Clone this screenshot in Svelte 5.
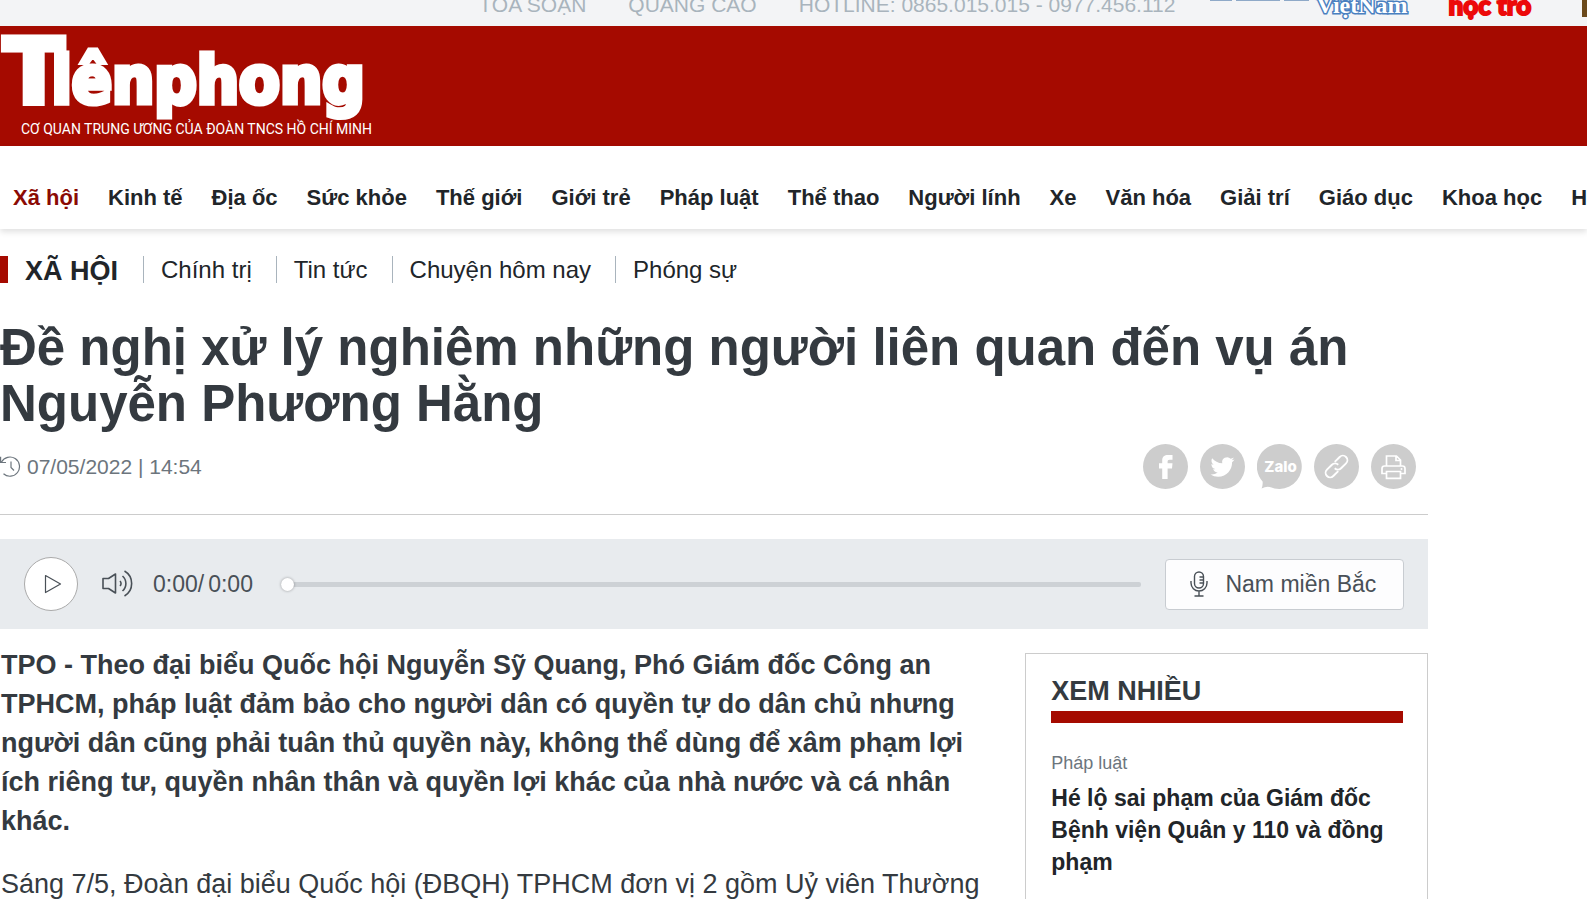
<script lang="ts">
  const topLinks = ['TÒA SOẠN', 'QUẢNG CÁO', 'HOTLINE: 0865.015.015 - 0977.456.112'];

  const categories = [
    'Xã hội', 'Kinh tế', 'Địa ốc', 'Sức khỏe', 'Thế giới', 'Giới trẻ', 'Pháp luật', 'Thể thao',
    'Người lính', 'Xe', 'Văn hóa', 'Giải trí', 'Giáo dục', 'Khoa học', 'Hàng không'
  ];
  const active = 'Xã hội';

  const subCategories = ['Chính trị', 'Tin tức', 'Chuyện hôm nay', 'Phóng sự'];

  const popular = [
    { category: 'Pháp luật', title: 'Hé lộ sai phạm của Giám đốc Bệnh viện Quân y 110 và đồng phạm' }
  ];

  let position = 0;
</script>

<div class="page">
  <div class="topbar">
    {#each topLinks as link}
      <a href="#top">{link}</a>
    {/each}
    <div class="partners">
      <a class="partner-line" href="#svvn" aria-label="Sinh viên">
        <svg width="99" height="2" viewBox="0 0 99 2"><path d="M0 0H22M26 0H70M74 0H99" stroke="#8ea9c8" stroke-width="2" /></svg>
      </a>
      <a class="vietnam" href="#svvn">ViệtNam</a>
      <a class="hoctro" href="#hoctro">học trò</a>
      <a class="golf" href="#golf" aria-label="Golf"></a>
    </div>
  </div>

  <header>
    <a class="logo" href="#home">
      <span class="wordmark"><span class="cap">T</span><span>iên</span><span>phong</span></span>
      <span class="tagline">CƠ QUAN TRUNG ƯƠNG CỦA ĐOÀN TNCS HỒ CHÍ MINH</span>
    </a>
  </header>

  <nav class="main-nav">
    {#each categories as category}
      <a href="#category" class:active={category === active}>{category}</a>
    {/each}
  </nav>

  <main>
    <div class="sub-nav">
      <a class="current" href="#xa-hoi">XÃ HỘI</a>
      {#each subCategories as sub}
        <a href="#sub">{sub}</a>
      {/each}
    </div>

    <h1>Đề nghị xử lý nghiêm những người liên quan đến vụ án Nguyễn Phương Hằng</h1>

    <div class="meta">
      <svg class="clock" width="21" height="22" viewBox="0 0 21 22" fill="none" stroke="#6c757d" stroke-width="1.2">
        <path d="M1.500 6A9.600 9.600 0 1 1 3.500 17.800M.6 .8V6.500H6M11 5.500V11.500L14 14.500" />
      </svg>
      <time>07/05/2022 | 14:54</time>
      <div class="share">
        <button aria-label="Facebook">
          <svg viewBox="0 0 45 45">
            <circle cx="22.500" cy="22.500" r="22.500" fill="#cdcdcd" />
            <path d="M19.200 35V24.500H16V19.300H19.200V16.500C19.200 12.500 21.500 11 25 11H29.500V15.700H26.700C25 15.700 24.600 16.500 24.600 17.700V19.300H29.500L29 24.500H24.600V35Z" fill="#fff" />
          </svg>
        </button>
        <button aria-label="Twitter">
          <svg viewBox="0 0 45 45">
            <circle cx="22.500" cy="22.500" r="22.500" fill="#cdcdcd" />
            <path transform="translate(10.500 11)" d="M23.953 4.570a10 10 0 0 1-2.825.775 4.958 4.958 0 0 0 2.163-2.723c-.951.555-2.005.959-3.127 1.184a4.920 4.920 0 0 0-8.384 4.482C7.690 8.095 4.067 6.130 1.640 3.162a4.822 4.822 0 0 0-.666 2.475c0 1.710.870 3.213 2.188 4.096a4.904 4.904 0 0 1-2.228-.616v.060a4.923 4.923 0 0 0 3.946 4.827 4.996 4.996 0 0 1-2.212.085 4.936 4.936 0 0 0 4.604 3.417 9.867 9.867 0 0 1-6.102 2.105c-.390 0-.779-.023-1.170-.067a13.995 13.995 0 0 0 7.557 2.209c9.053 0 13.998-7.496 13.998-13.985 0-.210 0-.420-.015-.630A9.935 9.935 0 0 0 24 4.590z" fill="#fff" />
          </svg>
        </button>
        <button aria-label="Zalo">
          <svg viewBox="0 0 45 45">
            <path d="M22.500 0A22.500 22.500 0 1 1 13 43Q9 42 4.600 44.500Q6 41 5.600 37.500A22.500 22.500 0 0 1 22.500 0Z" fill="#cdcdcd" />
            <text x="23.500" y="28" text-anchor="middle" class="zalo">Zalo</text>
          </svg>
        </button>
        <button aria-label="Sao chép liên kết">
          <svg viewBox="0 0 45 45">
            <circle cx="22.500" cy="22.500" r="22.500" fill="#cdcdcd" />
            <g transform="rotate(-45 22.500 22.500)" fill="none" stroke="#fff" stroke-width="1.900">
              <path d="M20.500 27H13.500A4.500 4.500 0 0 1 13.500 18H20.500A4.500 4.500 0 0 1 25 22.500" />
              <path d="M24.500 18H31.500A4.500 4.500 0 0 1 31.500 27H24.500A4.500 4.500 0 0 1 20 22.500" />
            </g>
          </svg>
        </button>
        <button aria-label="In bài viết">
          <svg viewBox="0 0 45 45">
            <circle cx="22.500" cy="22.500" r="22.500" fill="#cdcdcd" />
            <g fill="none" stroke="#fff" stroke-width="1.700">
              <path d="M15.500 22V12H25.500L29.500 16V22M25 12V16.500H29.500" />
              <path d="M15.500 29.500H11V24.500Q11 22 13.500 22H31.500Q34 22 34 24.500V29.500H29.500" />
              <path d="M15.500 27.500H29.500V34.300H15.500Z" />
            </g>
            <circle cx="30.500" cy="25" r="1" fill="#fff" />
          </svg>
        </button>
      </div>
    </div>

    <div class="player">
      <button class="play" aria-label="Phát">
        <svg width="18" height="20" viewBox="0 0 18 20" fill="none" stroke="#495057" stroke-width="1.200" stroke-linejoin="round">
          <path d="M1.500 1.500L16.500 10L1.500 18.500Z" />
        </svg>
      </button>
      <button class="volume" aria-label="Âm lượng">
        <svg width="32" height="28" viewBox="0 0 32 28" fill="none" stroke="#495057" stroke-width="1.600" stroke-linejoin="round">
          <path d="M1 8.500H6.500L13.500 4V23L6.500 18.500H1Z" />
          <path d="M18 11A3.500 3.500 0 0 1 18 16M20.500 6A10 10 0 0 1 20.500 21M22.500 1A14.500 14.500 0 0 1 22.500 26" />
        </svg>
      </button>
      <div class="time"><span>0:00/</span><span>0:00</span></div>
      <input type="range" min="0" max="100" bind:value={position} aria-label="Vị trí phát" />
      <button class="voice">
        <svg width="18" height="26" viewBox="0 0 18 26" fill="none" stroke="#495057" stroke-width="1.400">
          <rect x="4.500" y="1" width="9" height="16" rx="4.500" />
          <path d="M1 10V12A8 8 0 0 0 17 12V10M9 20V25M4.500 25H13.500M9.500 6H13M9.500 9H13M9.500 12H13" />
        </svg>
        Nam miền Bắc
      </button>
    </div>

    <div class="columns">
      <article>
        <p class="sapo">TPO - Theo đại biểu Quốc hội Nguyễn Sỹ Quang, Phó Giám đốc Công an TPHCM, pháp luật đảm bảo cho người dân có quyền tự do dân chủ nhưng người dân cũng phải tuân thủ quyền này, không thể dùng để xâm phạm lợi ích riêng tư, quyền nhân thân và quyền lợi khác của nhà nước và cá nhân khác.</p>
        <p>Sáng 7/5, Đoàn đại biểu Quốc hội (ĐBQH) TPHCM đơn vị 2 gồm Uỷ viên Thường</p>
      </article>
      <aside>
        <h2>XEM NHIỀU</h2>
        {#each popular as story}
          <a class="tag" href="#phap-luat">{story.category}</a>
          <h3><a href="#story">{story.title}</a></h3>
        {/each}
      </aside>
    </div>
  </main>
</div>

<style>
  :global(body) {
    background: #fff;
  }

  .page {
    display: flex;
    flex-direction: column;
    height: 100vh;
    overflow: hidden;
    font-family: "Liberation Sans", Arial, sans-serif;
    color: #212529;
  }

  a {
    color: inherit;
    text-decoration: none;
  }

  button {
    padding: 0;
    border: 0;
    background: none;
    font-family: inherit;
    color: inherit;
    cursor: pointer;
  }

  svg {
    display: block;
    flex: none;
  }

  .topbar {
    display: flex;
    flex: none;
    align-items: flex-end;
    gap: 42px;
    height: 17px;
    padding: 0 0 9px 479px;
    overflow: hidden;
    background: #f3f4f6;
    color: #a9b4bd;
    font-size: 21px;
    line-height: 24px;
    white-space: nowrap;
  }

  .partners {
    display: flex;
    flex: none;
    align-items: flex-end;
    margin-left: -7px;
  }

  .partner-line {
    align-self: flex-start;
    padding: 7px 7px 0 0;
  }

  .vietnam {
    width: 91px;
    margin-right: 41px;
    color: #fff;
    font-family: "Liberation Serif", serif;
    font-size: 24px;
    font-weight: 700;
    -webkit-text-stroke: 3px #4a80c0;
    paint-order: stroke fill;
  }

  .hoctro {
    width: 84px;
    margin-right: 50px;
    color: #ec0a0a;
    font-family: Lato, sans-serif;
    font-size: 26px;
    font-weight: 900;
    -webkit-text-stroke: 2px #ec0a0a;
  }

  .golf {
    width: 60px;
    height: 24px;
    background: #6b4a1c;
  }

  header {
    flex: none;
    height: 120px;
    background: #a50a00;
  }

  .logo {
    display: inline-flex;
    flex-direction: column;
    color: #fff;
  }

  .wordmark {
    display: flex;
    align-items: baseline;
    height: 91px;
    padding-left: 3px;
    font-family: "DejaVu Sans Condensed", "DejaVu Sans", sans-serif;
    font-size: 66px;
    font-weight: 700;
    line-height: 91px;
    text-shadow: -2px -1px 0 #a50a00;
    -webkit-text-stroke: 5px #fff;
  }

  .cap {
    margin-right: -13px;
    font-family: "DejaVu Sans", sans-serif;
    font-size: 90px;
  }

  .tagline {
    padding-left: 21px;
    font-family: Roboto, sans-serif;
    font-size: 14px;
    line-height: 24px;
    white-space: nowrap;
  }

  .main-nav {
    display: flex;
    flex: none;
    gap: 29px;
    padding: 38px 0 17px 13px;
    overflow: hidden;
    box-shadow: 0 3px 6px rgba(0, 0, 0, 0.12);
    font-size: 22px;
    font-weight: 700;
    line-height: 28px;
    white-space: nowrap;
  }

  .active {
    color: #8b0a04;
  }

  main {
    display: flex;
    flex: 1;
    flex-direction: column;
    width: 90%;
  }

  .sub-nav {
    display: flex;
    margin-top: 27px;
    font-size: 24px;
    line-height: 27px;
  }

  .sub-nav a {
    padding: 0 24px 0 17px;
    border-left: 1px solid #a9b4bd;
  }

  .sub-nav .current {
    padding-right: 25px;
    border-left: 8px solid #a50a00;
    font-size: 27px;
    font-weight: 700;
    line-height: 30px;
    height: 27px;
  }

  h1 {
    margin: 37px 0 0;
    color: #343a40;
    font-size: 51px;
    line-height: 56px;
  }

  .meta {
    display: flex;
    align-items: center;
    gap: 6px;
    padding: 12px 12px 25px 0;
    border-bottom: 1px solid #ccc;
    color: #6c757d;
    font-size: 21px;
  }

  .share {
    display: flex;
    gap: 12px;
    margin-left: auto;
  }

  .share svg {
    width: 45px;
    height: 45px;
  }

  .zalo {
    fill: #fff;
    font-family: Inter, sans-serif;
    font-size: 15px;
    font-weight: 800;
  }

  .player {
    display: flex;
    align-items: center;
    height: 90px;
    margin-top: 24px;
    padding: 0 24px;
    background: #e8ebee;
    color: #495057;
    font-size: 23px;
  }

  .play {
    display: flex;
    align-items: center;
    justify-content: center;
    box-sizing: border-box;
    width: 54px;
    height: 54px;
    padding-left: 4px;
    border: 1px solid #aaa;
    border-radius: 50%;
    background: #fff;
  }

  .volume {
    margin: 0 19px 0 24px;
  }

  .time {
    display: flex;
    gap: 4px;
  }

  input {
    flex: 1;
    height: 14px;
    margin: 0 24px 0 28px;
    background: transparent;
    appearance: none;
  }

  input::-webkit-slider-runnable-track {
    height: 5px;
    border-radius: 2px;
    background: #cdd1d5;
  }

  input::-webkit-slider-thumb {
    width: 13px;
    height: 13px;
    margin-top: -4px;
    border-radius: 50%;
    background: #fff;
    box-shadow: 0 0 3px rgba(0, 0, 0, 0.35);
    appearance: none;
  }

  .voice {
    display: flex;
    align-items: center;
    gap: 17px;
    height: 51px;
    padding: 0 27px 0 24px;
    border: 1px solid #c8ccd1;
    border-radius: 4px;
    background: #fdfdfe;
    font-size: 23px;
  }

  .columns {
    display: flex;
    flex: 1;
    gap: 24px;
  }

  article {
    flex: 1;
    padding: 17px 0 0 1px;
    color: #343a40;
    font-size: 27px;
    line-height: 39px;
  }

  p {
    margin: 0;
  }

  .sapo {
    margin-bottom: 24px;
    font-weight: 700;
  }

  aside {
    box-sizing: border-box;
    width: 403px;
    margin-top: 24px;
    padding: 20px 24px 0 25px;
    border: 1px solid #ccc;
    border-bottom: 0;
  }

  h2 {
    margin: 0 0 28px;
    padding-bottom: 3px;
    border-bottom: 12px solid #a50a00;
    color: #343a40;
    font-size: 27px;
    line-height: 34px;
  }

  .tag {
    display: block;
    color: #6c757d;
    font-size: 18px;
    line-height: 24px;
  }

  h3 {
    margin: 7px 0 0;
    font-size: 23px;
    line-height: 32px;
  }
</style>
